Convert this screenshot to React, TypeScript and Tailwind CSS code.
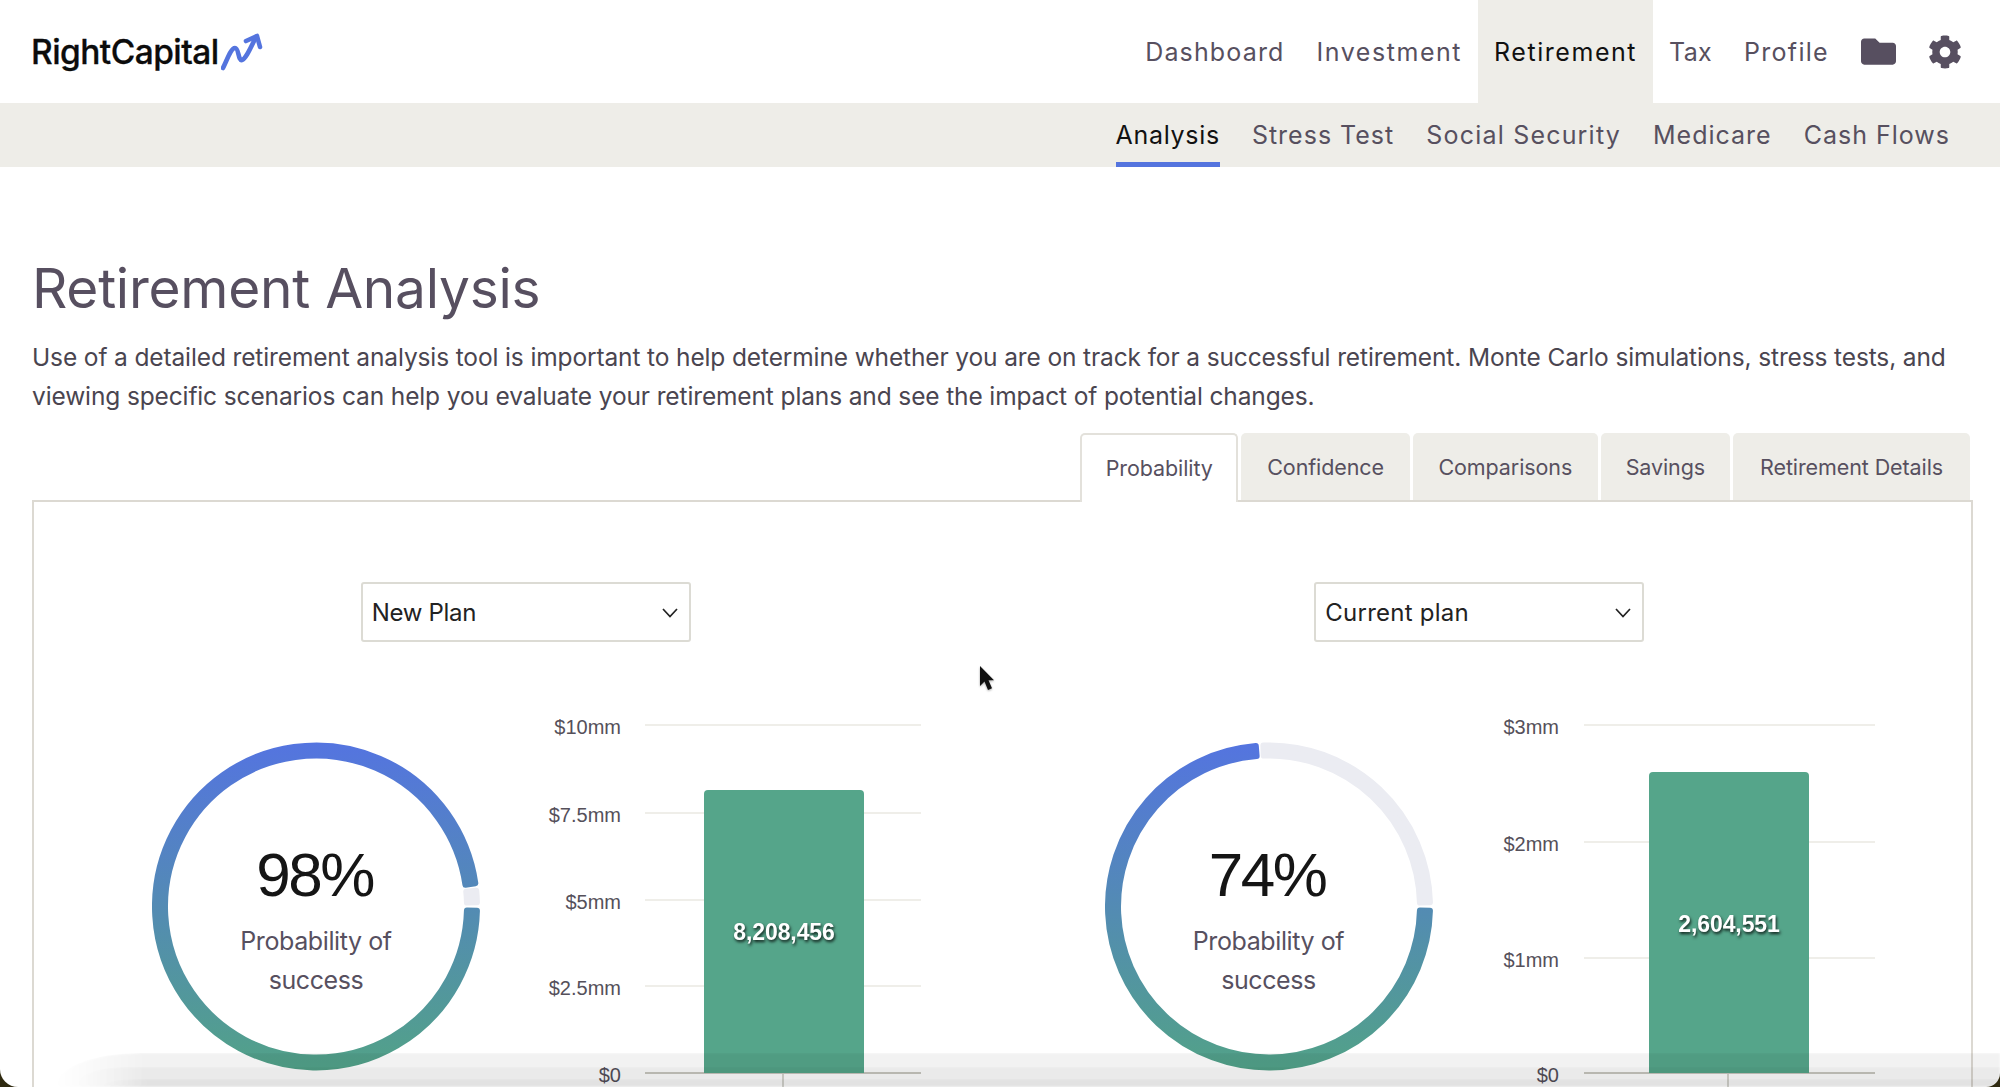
import { FaFolder, FaCog } from "react-icons/fa";

const nav: [string, string][] = [
  ["Dashboard", "tracking-[1.15px]"],
  ["Investment", "tracking-[1.55px]"],
  ["Retirement", "tracking-[1.55px]"],
  ["Tax", "tracking-[0.3px]"],
  ["Profile", "tracking-[1.3px]"],
];
const sub: [string, string][] = [
  ["Analysis", "tracking-[0.7px]"],
  ["Stress Test", "tracking-[1px]"],
  ["Social Security", "tracking-[1.2px]"],
  ["Medicare", "tracking-[1px]"],
  ["Cash Flows", "tracking-[1px]"],
];
const tabs: [string, string][] = [
  ["Probability", "px-[23.5px]"],
  ["Confidence", "px-[26px]"],
  ["Comparisons", "px-[25.5px]"],
  ["Savings", "px-[25px]"],
  ["Retirement Details", "px-[27px]"],
];

function sector(a0: number, a1: number) {
  const cx = 164;
  const cy = 164.5;
  const d = 1.1;
  const s = ((a0 + d) * Math.PI) / 180;
  const e = ((a1 - d) * Math.PI) / 180;
  const ro = 161;
  const ri = 151;
  const large = a1 - a0 - 2 * d > 180 ? 1 : 0;
  const p = (r: number, t: number) => `${(cx + r * Math.cos(t)).toFixed(2)} ${(cy + r * Math.sin(t)).toFixed(2)}`;
  return `M${p(ro, s)}A${ro} ${ro} 0 ${large} 1 ${p(ro, e)}L${p(ri, e)}A${ri} ${ri} 0 ${large} 0 ${p(ri, s)}Z`;
}

function Gauge({ pct, id, extra }: { pct: number; id: string; extra: string }) {
  const end = pct * 3.6;
  return (
    <div className={`grid w-[328px] h-[330px] mt-[27px] shrink-0 ${extra}`}>
      <svg width="328" height="330" viewBox="0 0 328 330" className="col-start-1 row-start-1">
        <defs>
          <linearGradient id={id} gradientUnits="userSpaceOnUse" x1="0" y1="0" x2="0" y2="330">
            <stop offset="0" stopColor="#5474e0" />
            <stop offset="1" stopColor="#52a287" />
          </linearGradient>
        </defs>
        <path d={sector(end + 0.5, 359.6)} fill="#ebecf2" stroke="#ebecf2" strokeWidth="6" strokeLinejoin="round" />
        <path d={sector(0.4, end)} fill={`url(#${id})`} stroke={`url(#${id})`} strokeWidth="6" strokeLinejoin="round" />
      </svg>
      <div className="col-start-1 row-start-1 flex flex-col items-center pt-[88px]">
        <div className="font-['Liberation_Sans',sans-serif] text-[62px] leading-[90px] tracking-[-2.5px] text-[#151515] pr-[3px]">{pct}%</div>
        <div className="font-['Inter',sans-serif] text-[25px] leading-[38.5px] tracking-[-0.4px] text-[#57505f] text-center mt-[2px] w-[200px]">
          Probability of success
        </div>
      </div>
    </div>
  );
}

function Bars({
  ticks, labelX, gridX1, gridX2, barX, barTop, value, valueY,
}: {
  ticks: [string, number][]; labelX: number; gridX1: number; gridX2: number; barX: number; barTop: number; value: string; valueY: number;
}) {
  return (
    <svg width="420" height="372" viewBox="0 0 420 372" className="ml-[40px] shrink-0">
      {ticks.map(([t, y], i) => (
        <g key={t}>
          <line x1={gridX1} x2={gridX2} y1={y} y2={y} stroke={i === ticks.length - 1 ? "#c9c8c0" : "#efeee9"} strokeWidth="2" />
          <text x={labelX} y={y + 9} textAnchor="end" className="font-['Liberation_Sans',sans-serif] text-[20px] fill-[#55505a]">{t}</text>
        </g>
      ))}
      <path d={`M${barX} 358V${barTop + 4}q0 -4 4 -4h152q4 0 4 4V358z`} fill="#55a58a" />
      <line x1={barX + 79} x2={barX + 79} y1="358" y2="372" stroke="#c9c8c0" strokeWidth="1.5" />
      <text
        x={barX + 80} y={valueY} textAnchor="middle"
        className="font-['Liberation_Sans',sans-serif] font-bold text-[23px] tracking-[-0.1px] fill-white [filter:drop-shadow(1px_2px_1.5px_rgba(0,0,0,0.8))]"
      >
        {value}
      </text>
    </svg>
  );
}

function Select({ label, track }: { label: string; track: string }) {
  return (
    <div className="mx-auto shrink-0 w-[330px] h-[60px] border-2 border-[#dcdbd4] rounded-[3px] flex items-center justify-between pl-[9px] pr-[11px] pt-[2px] bg-white">
      <span className={`font-['Inter',sans-serif] text-[24px] text-[#222] ${track}`}>{label}</span>
      <svg width="16" height="10" viewBox="0 0 16 10" fill="none" stroke="#222" strokeWidth="1.7">
        <path d="M1 1l7 7.5L15 1" />
      </svg>
    </div>
  );
}

export default function App() {
  return (
    <div className="w-[2000px] h-[1087px] bg-[#2f2a10]">
      <div className="relative w-full h-full bg-white rounded-bl-[18px] rounded-br-[14px] overflow-hidden flex flex-col font-['Inter',sans-serif]">
        <header className="h-[103px] shrink-0 flex items-stretch justify-between pl-[31px] pr-[38px]">
          <div className="flex items-start pt-[32px]">
            <span className="text-[33.5px] leading-[38px] mt-[1px] font-medium tracking-[-0.55px] text-[#0c0c0c] [-webkit-text-stroke:0.3px_#0c0c0c]">RightCapital</span>
            <svg width="42" height="38" viewBox="0 0 42 38" fill="none" stroke="#5474de" strokeWidth="4.6" strokeLinecap="round" strokeLinejoin="round" className="ml-[2px] mt-[1px]">
              <path d="M2 35C6 27 10 15 14 15C18 15 17 28 21 27C25 26 30 14 35 4" />
              <path d="M25 8L36 3L39 14" />
            </svg>
          </div>
          <nav className="flex items-stretch">
            {nav.map(([n, tr]) => (
              <div
                key={n}
                className={`flex items-center pt-[2px] px-[16px] text-[25px] ${tr} ${n === "Retirement" ? "bg-[#eeede8] text-[#111]" : "text-[#57505f]"}`}
              >
                {n}
              </div>
            ))}
            <div className="flex items-center ml-[16px] gap-[32px]">
              <FaFolder className="w-[35px] h-[35px] text-[#574f60]" />
              <FaCog className="w-[34px] h-[34px] text-[#574f60]" />
            </div>
          </nav>
        </header>

        <div className="h-[64px] shrink-0 bg-[#eeede8] flex justify-end gap-[32px] pr-[50px]">
          {sub.map(([s, tr], i) => (
            <div
              key={s}
              className={`flex items-center pt-[6px] border-b-[5px] text-[25px] ${tr} ${i === 0 ? "border-[#5474de] text-[#111]" : "border-transparent text-[#57505f]"}`}
            >
              {s}
            </div>
          ))}
        </div>

        <main className="flex-1 min-h-0 flex flex-col pl-[32px] pr-[27px] pt-[88px]">
          <h1 className="text-[55px] leading-[66px] tracking-[-0.26px] text-[#574f60]">Retirement Analysis</h1>
          <p className="mt-[17px] text-[24.5px] leading-[38.5px] tracking-[-0.13px] text-[#4a4550]">
            Use of a detailed retirement analysis tool is important to help determine whether you are on track for a successful retirement. Monte Carlo simulations, stress tests, and viewing specific scenarios can help you evaluate your retirement plans and see the impact of potential changes.
          </p>
          <div className="mt-[18px] flex justify-end gap-[3px] pr-[3px] relative z-10 -mb-[2px]">
            {tabs.map(([t, px], i) => (
              <div
                key={t}
                className={`flex items-center ${px} text-[21.5px] tracking-[-0.1px] text-[#57505f] rounded-t-[5px] ${i === 0 ? "h-[69px] bg-white border-2 border-b-0 border-[#e3e1db]" : "bg-[#eeede8] mb-[2px] h-[67px] pt-[2px]"}`}
              >
                {t}
              </div>
            ))}
          </div>
          <section className="flex-1 min-h-0 border-2 border-b-0 border-[#dcd9d2] px-[15px] pt-[80px] grid grid-cols-2 content-start">
            <div className="flex flex-col">
              <Select label="New Plan" track="tracking-[-0.3px]" />
              <div className="flex items-start mt-[73px] pl-[102px]">
                <Gauge pct={98} id="g1" extra="ml-[1px] -mr-[1px]" />
                <Bars
                  ticks={[["$10mm", 10], ["$7.5mm", 98], ["$5mm", 185], ["$2.5mm", 271], ["$0", 358]]}
                  labelX={102} gridX1={126} gridX2={402} barX={185} barTop={75} value="8,208,456" valueY={225}
                />
              </div>
            </div>
            <div className="flex flex-col">
              <Select label="Current plan" track="tracking-[0.25px]" />
              <div className="flex items-start mt-[73px] pl-[102px]">
                <Gauge pct={74} id="g2" extra="" />
                <Bars
                  ticks={[["$3mm", 10], ["$2mm", 127], ["$1mm", 243], ["$0", 358]]}
                  labelX={86} gridX1={111} gridX2={402} barX={176} barTop={57} value="2,604,551" valueY={217}
                />
              </div>
            </div>
          </section>
        </main>

        {/* pointer over the page */}
        <svg width="16" height="28" viewBox="0 0 16 28" className="absolute left-[979px] top-[665px] z-20 [filter:drop-shadow(0_1px_1px_rgba(0,0,0,0.35))]">
          <path d="M1 1v20l4.5-4.5L9 25l4-1.7-3.5-8H15z" fill="#111" />
        </svg>

        {/* window shadow along the bottom edge */}
        <div className="absolute left-[55px] right-0 bottom-0 h-[34px] bg-black/5 rounded-tl-[85px_34px] blur-[1px] [mask-image:linear-gradient(to_right,transparent,black_90px)] z-30 pointer-events-none" />
        <div className="absolute left-[75px] right-0 bottom-0 h-[20px] bg-black/[0.03] rounded-tl-[50px_20px] blur-[1px] [mask-image:linear-gradient(to_right,transparent,black_70px)] z-30 pointer-events-none" />
        <div className="absolute left-[100px] right-0 bottom-0 h-[8px] bg-black/[0.03] rounded-tl-[40px_8px] blur-[1px] [mask-image:linear-gradient(to_right,transparent,black_50px)] z-30 pointer-events-none" />
      </div>
    </div>
  );
}
